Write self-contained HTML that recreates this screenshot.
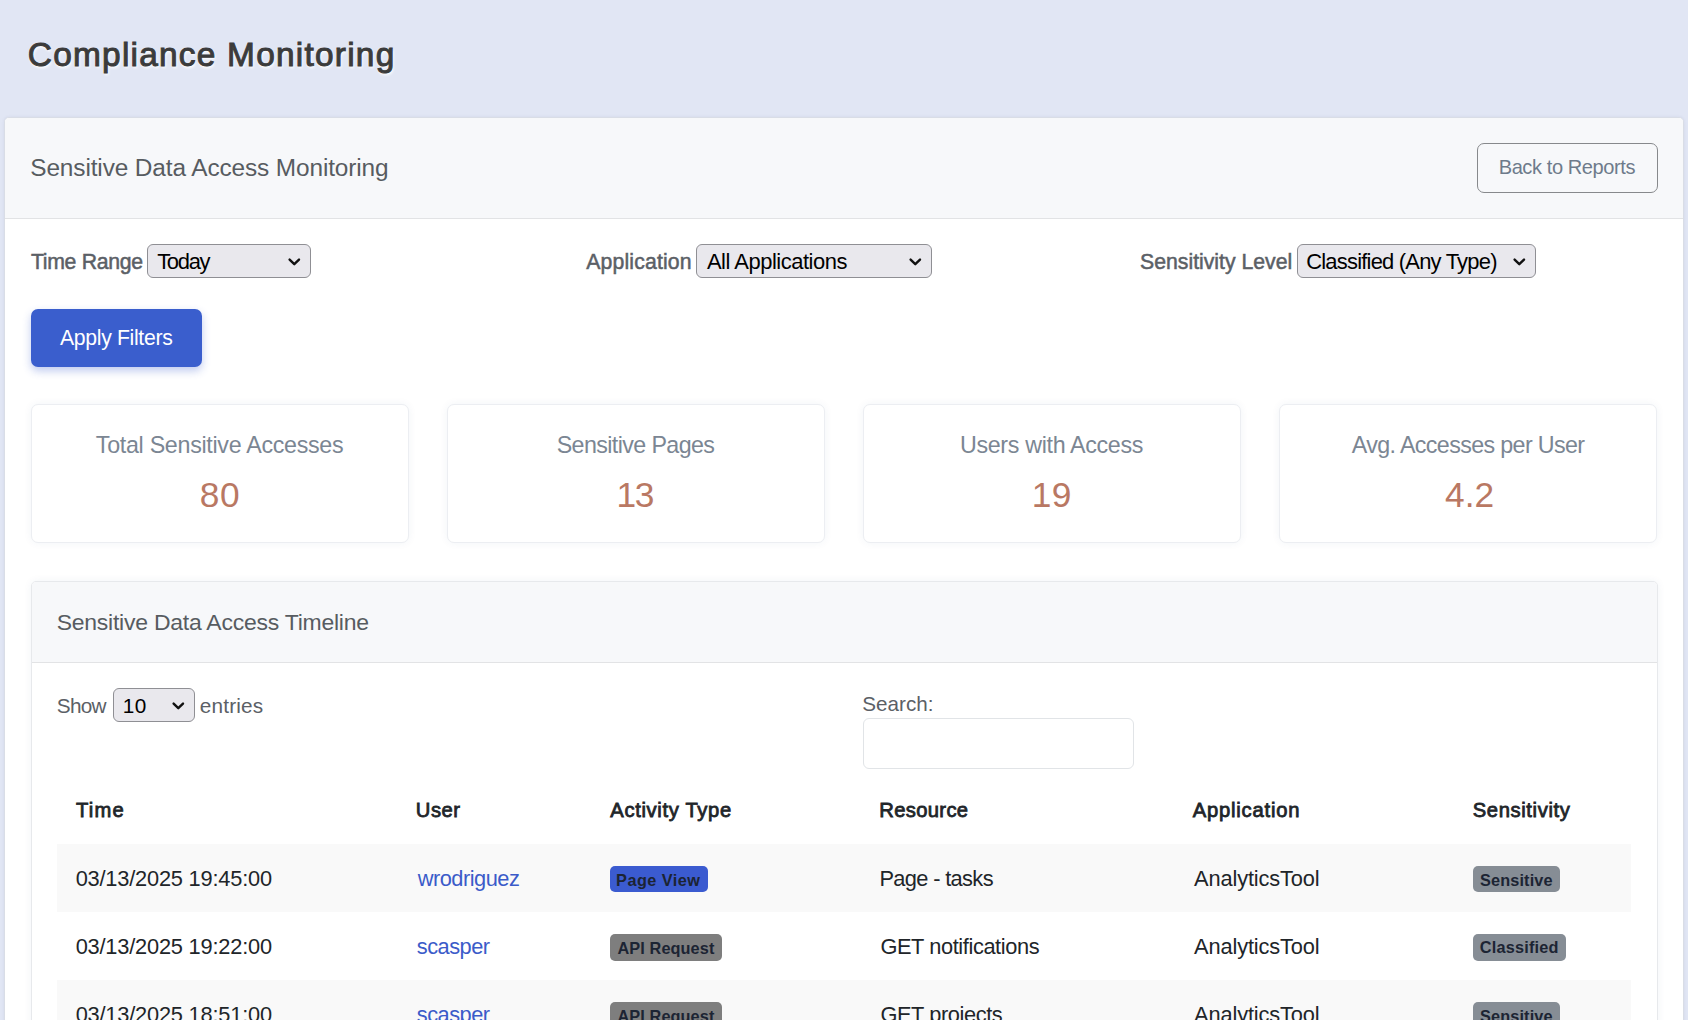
<!DOCTYPE html><html><head><meta charset="utf-8"><style>

*{box-sizing:border-box;margin:0;padding:0}
html,body{width:1688px;height:1020px;overflow:hidden}
body{background:#e1e6f4;font-family:"Liberation Sans",sans-serif;color:#212529;position:relative}
.a{position:absolute}
.t{position:absolute;white-space:nowrap;line-height:1}
.card{background:#fff;border:1px solid #d9dde6;border-radius:5px;box-shadow:0 0 3px rgba(100,110,150,.12)}
.sel{background:#e9e8ed;border:1px solid #8f8f94;border-radius:6px}
.stat{width:378px;height:139px;background:#fff;border:1px solid #eceef2;border-radius:7px;box-shadow:0 0 8px rgba(40,60,120,.06)}
.tcard{background:#fff;border:1px solid #e7e9ec;border-radius:5px;box-shadow:0 0 8px rgba(40,60,120,.06)}
.badge{border-radius:5px}

</style></head><body>

<div class="a" style="left:0;top:0;width:1688px;height:118px;background:#e1e6f4"></div>
<div class="a card" style="left:4px;top:117px;width:1680px;height:960px"></div>
<div class="a" style="left:5px;top:118px;width:1678px;height:101px;background:#f7f8fa;border-bottom:1px solid #e2e3e5;border-radius:4px 4px 0 0"></div>
<div class="a" style="left:1477px;top:143px;width:181px;height:50px;border:1px solid #87898c;border-radius:7px"></div>
<div class="a sel" style="left:147px;top:244px;width:164px;height:34px"></div>
<div class="a sel" style="left:696px;top:244px;width:236px;height:34px"></div>
<div class="a sel" style="left:1297px;top:244px;width:239px;height:34px"></div>
<div class="a" style="left:31px;top:309px;width:171px;height:58px;background:#3a5ecd;border-radius:7px;box-shadow:0 4px 9px rgba(58,94,205,.32)"></div>
<div class="a stat" style="left:31px;top:404px"></div>
<div class="a stat" style="left:447px;top:404px"></div>
<div class="a stat" style="left:863px;top:404px"></div>
<div class="a stat" style="left:1279px;top:404px"></div>
<div class="a tcard" style="left:31px;top:581px;width:1627px;height:500px"></div>
<div class="a" style="left:32px;top:582px;width:1625px;height:81px;background:#f7f8fa;border-bottom:1px solid #e2e3e5;border-radius:4px 4px 0 0"></div>
<div class="a sel" style="left:113px;top:688px;width:82px;height:34px"></div>
<div class="a" style="left:863px;top:718px;width:271px;height:51px;border:1px solid #e1e4e7;border-radius:6px"></div>
<div class="a" style="left:57px;top:844px;width:1574px;height:68px;background:#f9f9f9"></div>
<div class="a" style="left:57px;top:980px;width:1574px;height:68px;background:#f9f9f9"></div>
<div class="a badge" style="left:610px;top:866px;width:98px;height:26px;background:#3b5bd0"></div>
<div class="a badge" style="left:1473px;top:866px;width:87px;height:26px;background:#868d95"></div>
<div class="a badge" style="left:610px;top:934px;width:112px;height:27px;background:#7e7e7e"></div>
<div class="a badge" style="left:1473px;top:934px;width:93px;height:27px;background:#868d95"></div>
<div class="a badge" style="left:610px;top:1002px;width:112px;height:27px;background:#7e7e7e"></div>
<div class="a badge" style="left:1473px;top:1002px;width:87px;height:27px;background:#868d95"></div>
<svg class="a" style="left:285.6px;top:256.2px" width="16.6" height="11.8"><path d="M3.60 3.60 L8.30 8.20 L13.00 3.60" fill="none" stroke="#111" stroke-width="2.4" stroke-linecap="round" stroke-linejoin="round"/></svg><svg class="a" style="left:906.8px;top:256.2px" width="16.6" height="11.8"><path d="M3.60 3.60 L8.30 8.20 L13.00 3.60" fill="none" stroke="#111" stroke-width="2.4" stroke-linecap="round" stroke-linejoin="round"/></svg><svg class="a" style="left:1510.6px;top:256.2px" width="16.6" height="11.8"><path d="M3.60 3.60 L8.30 8.20 L13.00 3.60" fill="none" stroke="#111" stroke-width="2.4" stroke-linecap="round" stroke-linejoin="round"/></svg><svg class="a" style="left:170.0px;top:700.2px" width="16.6" height="11.8"><path d="M3.60 3.60 L8.30 8.20 L13.00 3.60" fill="none" stroke="#111" stroke-width="2.4" stroke-linecap="round" stroke-linejoin="round"/></svg>
<div class="t" id="title" style="left:27.83px;top:38.00px;font-size:33.43px;letter-spacing:1.230px;color:#3b3b3b;-webkit-text-stroke:1.0px #3b3b3b;text-shadow:1px 2px 3px #fff,0 1px 1px rgba(255,255,255,.9);">Compliance Monitoring</div>
<div class="t" id="hdr" style="left:30.27px;top:155.51px;font-size:24.42px;letter-spacing:-0.123px;color:#575c61;">Sensitive Data Access Monitoring</div>
<div class="t" id="back" style="left:1498.68px;top:156.81px;font-size:20.06px;letter-spacing:-0.414px;color:#6e7b8b;">Back to Reports</div>
<div class="t" id="lbl1" style="left:30.99px;top:250.57px;font-size:21.22px;letter-spacing:-0.311px;color:#5b6066;-webkit-text-stroke:0.5px #5b6066;">Time Range</div>
<div class="t" id="sel1" style="left:157.20px;top:250.81px;font-size:21.95px;letter-spacing:-1.300px;color:#000;">Today</div>
<div class="t" id="lbl2" style="left:586.19px;top:250.57px;font-size:21.22px;letter-spacing:0.160px;color:#5b6066;-webkit-text-stroke:0.5px #5b6066;">Application</div>
<div class="t" id="sel2" style="left:706.90px;top:250.81px;font-size:21.95px;letter-spacing:-0.467px;color:#000;">All Applications</div>
<div class="t" id="lbl3" style="left:1140.09px;top:250.57px;font-size:21.22px;letter-spacing:0.000px;color:#5b6066;-webkit-text-stroke:0.5px #5b6066;">Sensitivity Level</div>
<div class="t" id="sel3" style="left:1306.20px;top:250.81px;font-size:21.95px;letter-spacing:-0.780px;color:#000;">Classified (Any Type)</div>
<div class="t" id="apply" style="left:60.00px;top:326.81px;font-size:21.22px;letter-spacing:-0.333px;color:#fff;">Apply Filters</div>
<div class="t" id="s1l" style="left:95.87px;top:433.91px;font-size:23.26px;letter-spacing:-0.296px;color:#7b8693;">Total Sensitive Accesses</div>
<div class="t" id="s2l" style="left:556.67px;top:433.91px;font-size:23.26px;letter-spacing:-0.600px;color:#7b8693;">Sensitive Pages</div>
<div class="t" id="s3l" style="left:959.97px;top:433.91px;font-size:23.26px;letter-spacing:-0.325px;color:#7b8693;">Users with Access</div>
<div class="t" id="s4l" style="left:1351.87px;top:433.91px;font-size:23.26px;letter-spacing:-0.629px;color:#7b8693;">Avg. Accesses per User</div>
<div class="t" id="s1n" style="left:199.83px;top:476.70px;font-size:35.32px;letter-spacing:0.600px;color:#b97863;">80</div>
<div class="t" id="s2n" style="left:616.43px;top:476.70px;font-size:35.32px;letter-spacing:-1.400px;color:#b97863;">13</div>
<div class="t" id="s3n" style="left:1031.73px;top:476.70px;font-size:35.32px;letter-spacing:0.400px;color:#b97863;">19</div>
<div class="t" id="s4n" style="left:1445.03px;top:476.70px;font-size:35.32px;letter-spacing:0.000px;color:#b97863;">4.2</div>
<div class="t" id="thdr" style="left:56.66px;top:610.81px;font-size:22.97px;letter-spacing:-0.234px;color:#575c61;">Sensitive Data Access Timeline</div>
<div class="t" id="show" style="left:56.84px;top:695.71px;font-size:20.78px;letter-spacing:-0.800px;color:#5b6066;">Show</div>
<div class="t" id="ten" style="left:122.74px;top:695.71px;font-size:20.78px;letter-spacing:0.400px;color:#000;">10</div>
<div class="t" id="entries" style="left:199.84px;top:695.71px;font-size:20.78px;letter-spacing:0.167px;color:#5b6066;">entries</div>
<div class="t" id="search" style="left:862.36px;top:693.50px;font-size:20.64px;letter-spacing:-0.000px;color:#5b6066;">Search:</div>
<div class="t" id="h1" style="left:75.96px;top:800.41px;font-size:20.20px;letter-spacing:1.200px;color:#212529;-webkit-text-stroke:0.8px #212529;">Time</div>
<div class="t" id="h2" style="left:415.86px;top:800.41px;font-size:20.20px;letter-spacing:0.467px;color:#212529;-webkit-text-stroke:0.8px #212529;">User</div>
<div class="t" id="h3" style="left:610.26px;top:800.41px;font-size:20.20px;letter-spacing:0.667px;color:#212529;-webkit-text-stroke:0.8px #212529;">Activity Type</div>
<div class="t" id="h4" style="left:879.26px;top:800.41px;font-size:20.20px;letter-spacing:0.343px;color:#212529;-webkit-text-stroke:0.8px #212529;">Resource</div>
<div class="t" id="h5" style="left:1192.66px;top:800.41px;font-size:20.20px;letter-spacing:0.800px;color:#212529;-webkit-text-stroke:0.8px #212529;">Application</div>
<div class="t" id="h6" style="left:1472.66px;top:800.41px;font-size:20.20px;letter-spacing:0.640px;color:#212529;-webkit-text-stroke:0.8px #212529;">Sensitivity</div>
<div class="t" id="r1c1" style="left:75.68px;top:867.82px;font-size:21.80px;letter-spacing:-0.200px;color:#212529;">03/13/2025 19:45:00</div>
<div class="t" id="r1c2" style="left:417.78px;top:867.82px;font-size:21.80px;letter-spacing:-0.511px;color:#3b5bc9;">wrodriguez</div>
<div class="t" id="r1c4" style="left:879.38px;top:867.82px;font-size:21.80px;letter-spacing:-0.636px;color:#212529;">Page - tasks</div>
<div class="t" id="r1c5" style="left:1194.08px;top:867.82px;font-size:21.80px;letter-spacing:-0.133px;color:#212529;">AnalyticsTool</div>
<div class="t" id="r2c1" style="left:75.68px;top:935.82px;font-size:21.80px;letter-spacing:-0.200px;color:#212529;">03/13/2025 19:22:00</div>
<div class="t" id="r2c2" style="left:416.78px;top:935.82px;font-size:21.80px;letter-spacing:-0.500px;color:#3b5bc9;">scasper</div>
<div class="t" id="r2c4" style="left:880.38px;top:935.82px;font-size:21.80px;letter-spacing:-0.400px;color:#212529;">GET notifications</div>
<div class="t" id="r2c5" style="left:1194.08px;top:935.82px;font-size:21.80px;letter-spacing:-0.133px;color:#212529;">AnalyticsTool</div>
<div class="t" id="r3c1" style="left:75.68px;top:1003.82px;font-size:21.80px;letter-spacing:-0.200px;color:#212529;">03/13/2025 18:51:00</div>
<div class="t" id="r3c2" style="left:416.78px;top:1003.82px;font-size:21.80px;letter-spacing:-0.500px;color:#3b5bc9;">scasper</div>
<div class="t" id="r3c4" style="left:880.38px;top:1003.82px;font-size:21.80px;letter-spacing:-0.400px;color:#212529;">GET projects</div>
<div class="t" id="r3c5" style="left:1194.08px;top:1003.82px;font-size:21.80px;letter-spacing:-0.133px;color:#212529;">AnalyticsTool</div>
<div class="t" id="b1a" style="left:616.10px;top:871.81px;font-size:16.28px;letter-spacing:0.450px;color:#1c2433;font-weight:bold;">Page View</div>
<div class="t" id="b1b" style="left:1480.10px;top:871.81px;font-size:16.28px;letter-spacing:0.125px;color:#1c2433;font-weight:bold;">Sensitive</div>
<div class="t" id="b2a" style="left:617.50px;top:939.60px;font-size:16.28px;letter-spacing:0.100px;color:#1c2433;font-weight:bold;">API Request</div>
<div class="t" id="b2b" style="left:1479.80px;top:939.41px;font-size:16.28px;letter-spacing:0.200px;color:#1c2433;font-weight:bold;">Classified</div>
<div class="t" id="b3a" style="left:617.50px;top:1007.60px;font-size:16.28px;letter-spacing:0.100px;color:#1c2433;font-weight:bold;">API Request</div>
<div class="t" id="b3b" style="left:1480.10px;top:1007.81px;font-size:16.28px;letter-spacing:0.125px;color:#1c2433;font-weight:bold;">Sensitive</div>
</body></html>
